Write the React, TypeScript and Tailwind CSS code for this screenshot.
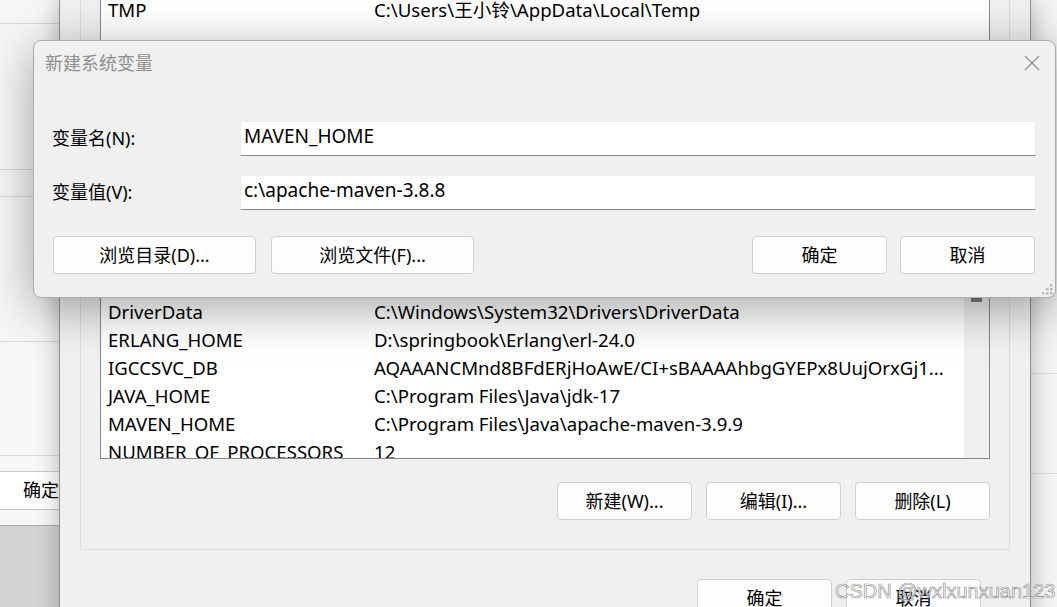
import React from "react";

const lowerRows: [string, string][] = [
  ["ComSpec", "C:\\Windows\\system32\\cmd.exe"],
  ["DriverData", "C:\\Windows\\System32\\Drivers\\DriverData"],
  ["ERLANG_HOME", "D:\\springbook\\Erlang\\erl-24.0"],
  ["IGCCSVC_DB", "AQAAANCMnd8BFdERjHoAwE/CI+sBAAAAhbgGYEPx8UujOrxGj1..."],
  ["JAVA_HOME", "C:\\Program Files\\Java\\jdk-17"],
  ["MAVEN_HOME", "C:\\Program Files\\Java\\apache-maven-3.9.9"],
  ["NUMBER_OF_PROCESSORS", "12"],
];

function Btn({ children, className = "" }: { children: React.ReactNode; className?: string }) {
  return (
    <div
      className={
        "h-[38px] shrink-0 rounded-[4px] border border-[#d0d0d0] bg-[#fdfdfd] text-[18px] text-black flex items-center justify-center " +
        className
      }
    >
      {children}
    </div>
  );
}

function Row({ name, value }: { name: string; value: string }) {
  return (
    <div className="h-[28px] shrink-0 flex items-center whitespace-nowrap text-[18.6px] leading-none">
      <div className="w-[273px] pl-[7px] shrink-0">{name}</div>
      <div>{value}</div>
    </div>
  );
}

export default function App() {
  return (
    <div className="relative w-[1057px] h-[607px] overflow-hidden bg-[#ececec] text-black font-['Noto_Sans','Noto_Sans_CJK_SC',sans-serif]">
      {/* left background window */}
      <div className="absolute left-0 top-0 w-[90px] h-[607px] bg-[#f7f7f7] flex flex-col">
        <div className="h-[24px] border-b border-[#d9d9d9]" />
        <div className="h-[146px] border-b border-[#d9d9d9]" />
        <div className="h-[27px] border-b border-[#d9d9d9]" />
        <div className="h-[145px] border-b border-[#d9d9d9]" />
        <div className="h-[114px] border-b border-[#d9d9d9]" />
        <div className="h-[16px] border-b border-[#c9c9c9]" />
        <div className="h-[38px] border-b border-[#c4c4c4] bg-white flex items-center pl-[23px] text-[18px]">确定</div>
        <div className="h-[15px]" />
        <div className="flex-1 border-t border-[#a9a9a9] bg-[#d4d4d4]" />
      </div>

      {/* right background strip */}
      <div className="absolute left-[1020px] top-0 w-[37px] h-[607px] bg-[#f4f4f4] flex flex-col">
        <div className="h-[374px] border-b border-[#dedede]" />
        <div className="h-[100px] border-b border-[#dedede]" />
      </div>

      {/* environment variables window */}
      <div className="absolute left-[59px] top-0 w-[972px] h-[640px] bg-[#f0f0f0] border-x border-[#8f8f8f] shadow-[0_0_22px_rgba(0,0,0,0.28)] flex flex-col pl-[20px]">
        {/* upper group (user variables) */}
        <div className="w-[930px] h-[228px] shrink-0 border-x border-b border-[#dcdcdc] px-[19px] flex flex-col">
          <div className="-mt-[4px] h-[160px] bg-white border-x border-b border-[#82868f] flex flex-col">
            <Row name="TMP" value="C:\Users\王小铃\AppData\Local\Temp" />
          </div>
        </div>
        {/* lower group (system variables) */}
        <div className="mt-[8px] w-[930px] shrink-0 border border-[#dcdcdc] px-[19px] pb-[29px] flex flex-col">
          <div className="h-[32px] flex items-center text-[18px]">系统变量(S)</div>
          <div className="h-[190px] bg-white border border-[#82868f] flex overflow-hidden">
            <div className="flex-1 flex flex-col overflow-hidden">
              {lowerRows.map(([n, v]) => (
                <Row key={n} name={n} value={v} />
              ))}
            </div>
            <div className="w-[25px] bg-[#f0f0f0] flex justify-center">
              <div className="mt-[10px] w-[11px] h-[22px] bg-[#7d7d7d]" />
            </div>
          </div>
          <div className="mt-[23px] flex justify-end gap-[14px]">
            <Btn className="w-[135px]">新建(W)...</Btn>
            <Btn className="w-[135px]">编辑(I)...</Btn>
            <Btn className="w-[135px]">删除(L)</Btn>
          </div>
        </div>
        <div className="mt-[29px] w-[901px] flex justify-end gap-[14px]">
          <Btn className="w-[135px]">确定</Btn>
          <Btn className="w-[135px]">取消</Btn>
        </div>
      </div>

      {/* new system variable dialog */}
      <div className="absolute left-[33px] top-[40px] w-[1023px] h-[258px] rounded-[8px] border border-[#ababab] bg-[#f0f0f0] shadow-[0_10px_50px_rgba(0,0,0,0.36)] flex flex-col">
        <div className="h-[44px] flex items-center justify-between pl-[11px] pr-[15px]">
          <div className="text-[18px] text-[#8e8e8e]">新建系统变量</div>
          <svg width="16" height="16" viewBox="0 0 16 16" className="block">
            <path d="M1 1 L15 15 M15 1 L1 15" stroke="#8a8a8a" strokeWidth="1.1" fill="none" />
          </svg>
        </div>
        <div className="mt-[36px] pl-[18px] pr-[19px] flex items-center">
          <div className="w-[188px] shrink-0 text-[18px]">变量名(N):</div>
          <div className="flex-1 h-[35px] bg-white rounded-t-[3px] border border-[#ececec] border-b-[#878787] flex items-center pl-[3px] pb-[4px] text-[19px]">
            MAVEN_HOME
          </div>
        </div>
        <div className="mt-[19px] pl-[18px] pr-[19px] flex items-center">
          <div className="w-[188px] shrink-0 text-[18px]">变量值(V):</div>
          <div className="flex-1 h-[35px] bg-white rounded-t-[3px] border border-[#ececec] border-b-[#878787] flex items-center pl-[3px] pb-[4px] text-[19px]">
            c:\apache-maven-3.8.8
          </div>
        </div>
        <div className="mt-[26px] pl-[19px] pr-[20px] flex items-center">
          <Btn className="w-[203px]">浏览目录(D)...</Btn>
          <Btn className="w-[203px] ml-[15px]">浏览文件(F)...</Btn>
          <div className="flex-1" />
          <Btn className="w-[135px]">确定</Btn>
          <Btn className="w-[135px] ml-[13px]">取消</Btn>
        </div>
        <svg width="12" height="12" viewBox="0 0 12 12" className="absolute right-[2px] bottom-[2px]">
          <g fill="#bdbdbd">
            <rect x="9" y="1" width="2.5" height="2.5" />
            <rect x="5" y="5" width="2.5" height="2.5" />
            <rect x="9" y="5" width="2.5" height="2.5" />
            <rect x="1" y="9" width="2.5" height="2.5" />
            <rect x="5" y="9" width="2.5" height="2.5" />
            <rect x="9" y="9" width="2.5" height="2.5" />
          </g>
        </svg>
      </div>

      {/* watermark */}
      <div className="absolute left-[835px] top-[581px] whitespace-nowrap text-[20px] leading-none font-['Liberation_Sans',Arial,sans-serif] text-[rgba(255,255,255,0.75)] [-webkit-text-stroke:0.7px_rgba(110,110,110,0.75)]">
        CSDN @wxlxunxuan123
      </div>
    </div>
  );
}
